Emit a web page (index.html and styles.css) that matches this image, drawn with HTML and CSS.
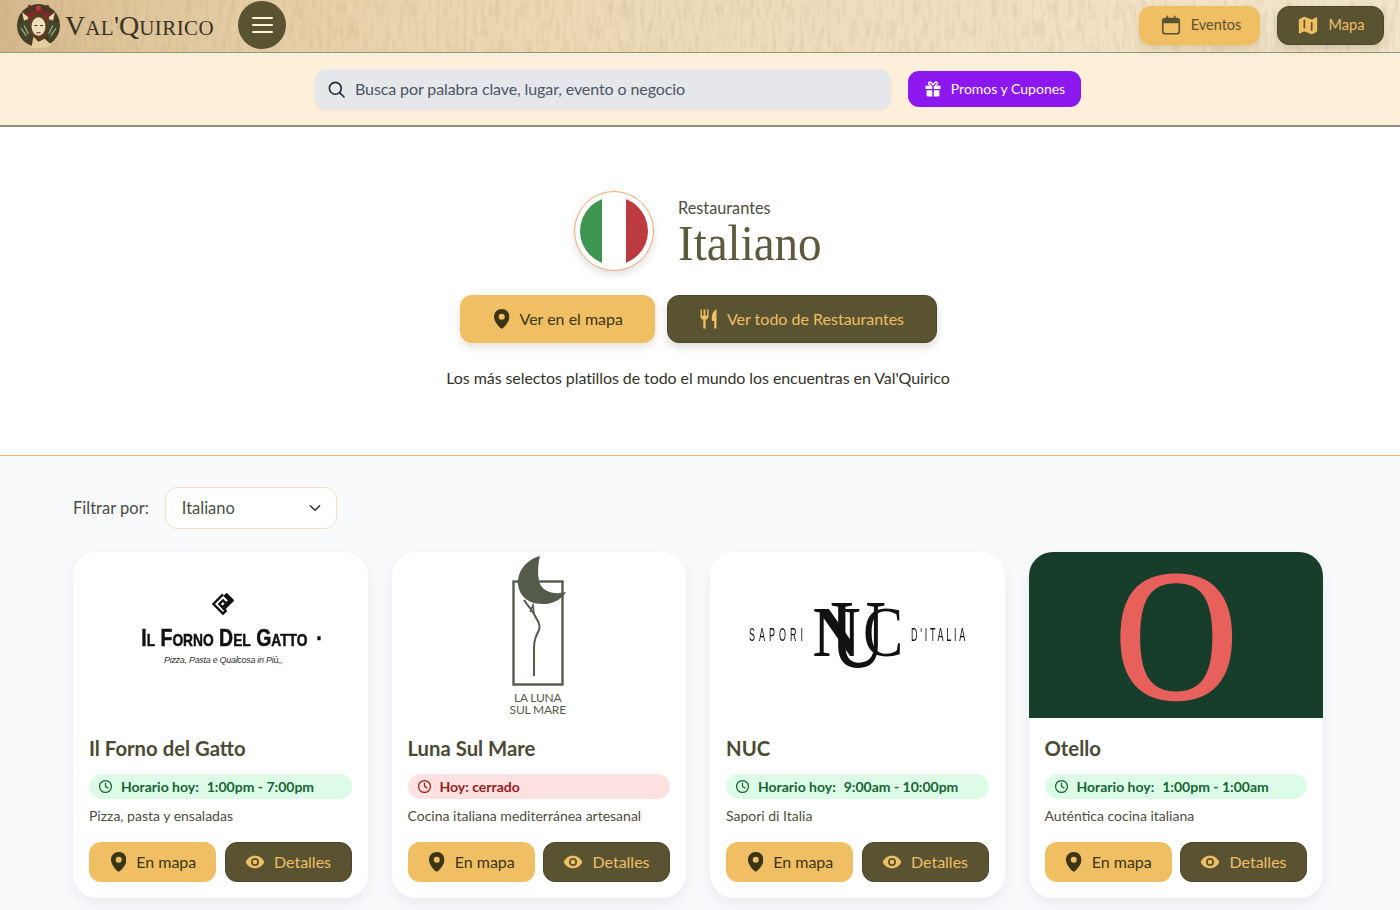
FILE: index.html
```html
<!DOCTYPE html>
<html lang="es">
<head>
<meta charset="utf-8">
<title>Val'Quirico - Italiano</title>
<link rel="stylesheet" href="styles.css">
</head>
<body>
<svg class="defs" aria-hidden="true">
  <defs>
    <symbol id="pin" viewBox="3.800 1.500 16.400 21"><path fill-rule="evenodd" d="M12 1.500C7.300 1.500 3.800 5 3.800 9.600c0 5.600 5.500 10.600 7.300 12.300.5.500 1.300.500 1.800 0 1.800-1.700 7.300-6.700 7.300-12.300C20.200 5 16.700 1.500 12 1.500zm0 11.300a3.200 3.200 0 1 1 0-6.400 3.200 3.200 0 0 1 0 6.400z"/></symbol>
    <symbol id="eye" viewBox="0 0 24 24"><path fill-rule="evenodd" d="M12 4.500C6.800 4.500 2.600 7.700 .8 12c1.800 4.300 6 7.500 11.200 7.500s9.400-3.200 11.200-7.500C21.400 7.700 17.200 4.500 12 4.500zm0 12.300a4.800 4.800 0 1 1 0-9.600 4.800 4.800 0 0 1 0 9.600zm0-7.500a2.700 2.700 0 1 0 0 5.400 2.700 2.700 0 0 0 0-5.400z"/></symbol>
    <symbol id="clock" viewBox="0 0 24 24"><circle cx="12" cy="12" r="9.500" fill="none" stroke="currentColor" stroke-width="2"/><path d="M12 6.500V12l3.800 2.200" fill="none" stroke="currentColor" stroke-width="2" stroke-linecap="round"/></symbol>
  </defs>
</svg>

<header class="topbar">
  <svg class="paper" aria-hidden="true" preserveAspectRatio="none">
    <filter id="fibers"><feTurbulence type="fractalNoise" baseFrequency="0.22 0.05" numOctaves="4" seed="7"/><feColorMatrix values="0 0 0 0 0.42  0 0 0 0 0.30  0 0 0 0 0.14  0 0 0 1.400 -0.600"/></filter>
    <rect width="100%" height="100%" filter="url(#fibers)"/>
  </svg>
  <div class="brand">
    <svg class="medallion" viewBox="1 2 44 44" aria-hidden="true">
      <circle cx="23" cy="24" r="21" fill="#4a3a22"/>
      <path d="M8 15c4-8 26-8 30 0l-6 7H14z" fill="#7d2a2c"/>
      <circle cx="23" cy="7" r="2.500" fill="#b33a3a"/><circle cx="14" cy="5" r="1.300" fill="#7d2a2c"/><circle cx="32" cy="5" r="1.300" fill="#7d2a2c"/>
      <path d="M7 11l6 5-3 9zM39 11l-6 5 3 9z" fill="#e8d9b0"/>
      <path d="M3 24c3 8 6 13 10 16l3-14-5-8zM43 24c-3 8-6 13-10 16l-3-14 5-8z" fill="#3d4a30"/>
      <path d="M6 27l5 7M9 24l4 8M40 27l-5 7M37 24l-4 8" stroke="#c9b98a" stroke-width="1" fill="none"/>
      <ellipse cx="23" cy="25" rx="10" ry="13" fill="#5a4022"/>
      <ellipse cx="23" cy="25" rx="6.800" ry="9" fill="#f1dfbc"/>
      <path d="M19 24h3M24.500 24h3M21 31h4" stroke="#4a3320" stroke-width="1" fill="none"/>
      <path d="M16 46l2-11 5 5 6-3 7 6c-5 3-13 4-20 3z" fill="#e3cf9d"/>
    </svg>
    <div class="wordmark">V<small>AL</small>'Q<small>UIRICO</small></div>
    <button class="menu-btn" aria-label="Menú"><span></span><span></span><span></span></button>
  </div>
  <nav class="top-actions">
    <a class="btn btn-gold btn-top btn-events">
      <svg class="ico-cal" viewBox="0 0 24 24" aria-hidden="true"><rect x="3" y="5" width="18" height="16.500" rx="2.500" fill="none" stroke="currentColor" stroke-width="1.800"/><path d="M3.500 10h17V7.500a2 2 0 0 0-2-2h-13a2 2 0 0 0-2 2z" fill="currentColor"/><path d="M8 2.500v4M16 2.500v4" stroke="currentColor" stroke-width="1.800" stroke-linecap="round"/></svg>
      <span>Eventos</span>
    </a>
    <a class="btn btn-dark btn-top btn-map">
      <svg class="ico-map" viewBox="0 0 24 24" aria-hidden="true"><path d="M2 6.500c0-.5.300-.9.700-1.100L7 3.200c.6-.3 1.300-.3 1.900 0l6.200 2.600c.6.300 1.300.3 1.900 0l3.500-2c.7-.4 1.500.1 1.500.9v13.800c0 .5-.3.9-.7 1.100L17 21.800c-.6.300-1.300.3-1.900 0L8.900 19.200c-.6-.3-1.300-.3-1.900 0l-3.500 2c-.7.400-1.500-.1-1.500-.9z"/><path class="map-crease" d="M8 7v8M16 9.500v8"/></svg>
      <span>Mapa</span>
    </a>
  </nav>
</header>

<section class="searchbar">
  <div class="search-input">
    <svg class="ico-search" viewBox="0 0 24 24" aria-hidden="true"><circle cx="10.500" cy="10.500" r="7.500" fill="none" stroke="currentColor" stroke-width="2"/><path d="M16 16l5.500 5.500" stroke="currentColor" stroke-width="2" stroke-linecap="round"/></svg>
    <span>Busca por palabra clave, lugar, evento o negocio</span>
  </div>
  <a class="promo-btn">
    <svg class="ico-gift" viewBox="0 0 24 24" aria-hidden="true"><path d="M2 7.500h9v4.500H2zM13 7.500h9v4.500h-9zM3.500 13.500H11V22H5a1.500 1.500 0 0 1-1.500-1.500zM13 13.500h7.500v7A1.500 1.500 0 0 1 19 22h-6z" fill="currentColor"/><path d="M12 7C10 3 8 2.200 6.800 3 5.500 4 6 6.800 9 7M12 7c2-4 4-4.800 5.200-4 1.300 1 .8 3.800-2.200 4" fill="none" stroke="currentColor" stroke-width="1.800"/></svg>
    <span>Promos y Cupones</span>
  </a>
</section>

<section class="hero">
  <div class="hero-head">
    <div class="flag"><div class="flag-inner"><i class="flag-g"></i><i class="flag-w"></i><i class="flag-r"></i></div></div>
    <div class="hero-titles">
      <div class="eyebrow">Restaurantes</div>
      <h1>Italiano</h1>
    </div>
  </div>
  <div class="hero-actions">
    <a class="btn btn-gold btn-hero btn-hero-map"><svg class="ico-md"><use href="#pin"/></svg><span>Ver en el mapa</span></a>
    <a class="btn btn-dark btn-hero btn-hero-all">
      <svg class="ico-fork" viewBox="2.500 1.500 18 21" aria-hidden="true"><path d="M3 2v7c0 2 1.300 3.300 3 3.700V22h2.500v-9.300c1.700-.4 3-1.700 3-3.700V2h-1.500v6.500H8.200V2H6.300v6.500H4.500V2zM20 2c-3 1-5 4.500-5 9v3h2.500v8H20z"/></svg>
      <span>Ver todo de Restaurantes</span>
    </a>
  </div>
  <p class="hero-text">Los más selectos platillos de todo el mundo los encuentras en Val'Quirico</p>
</section>

<main class="listing">
  <div class="filter">
    <label>Filtrar por:</label>
    <div class="select">
      <span>Italiano</span>
      <svg class="ico-chev" viewBox="0 0 24 24" aria-hidden="true"><path d="M5 8.500l7 7 7-7" fill="none" stroke="currentColor" stroke-width="2.200" stroke-linecap="round" stroke-linejoin="round"/></svg>
    </div>
  </div>

  <div class="grid">
    <article class="card">
      <div class="card-img logo-forno">
        <svg class="forno-mark" viewBox="0 0 24 24" aria-hidden="true"><path d="M12 1.500 1.500 12 12 22.500l3-3L8 12l4-4 3.500 3.500-3 3 1.800 1.800L22.500 8 16 1.500l-1.800 1.800 4.800 4.700-3.500 3.500L12 8" fill="none" stroke="#111" stroke-width="2.600"/></svg>
        <div class="forno-name"><span>Il Forno Del Gatto</span><b>·</b></div>
        <div class="forno-sub">Pizza, Pasta e Qualcosa in Più,,</div>
      </div>
      <div class="card-body">
        <h2>Il Forno del Gatto</h2>
        <div class="pill pill-open"><svg class="ico-clock"><use href="#clock"/></svg><span class="pill-label">Horario hoy:</span><span>1:00pm - 7:00pm</span></div>
        <p>Pizza, pasta y ensaladas</p>
        <div class="card-actions">
          <a class="btn btn-gold btn-card"><svg class="ico-md"><use href="#pin"/></svg><span>En mapa</span></a>
          <a class="btn btn-dark btn-card"><svg class="ico-eye"><use href="#eye"/></svg><span>Detalles</span></a>
        </div>
      </div>
    </article>

    <article class="card">
      <div class="card-img logo-luna">
        <svg class="luna-mark" viewBox="-1 0 120 150" aria-hidden="true">
          <rect x="33.500" y="31.500" width="49" height="103" fill="none" stroke="#555b4b" stroke-width="2.400"/>
          <path d="M60 6C42 11 37 26 38 35c2 14 14 20 28 19 10-1 16-6 20-12-12 3-22 0-26-8-3-9-2-20 0-28z" fill="#555b4b"/>
          <path d="M44 50c3 5 7 8 10 14 3 6 7 10 5 16-3 6-5 10-5 18l0 28" fill="none" stroke="#555b4b" stroke-width="2"/>
          <path d="M50 62l3-7 1 9" fill="none" stroke="#555b4b" stroke-width="1.500"/>
        </svg>
        <div class="luna-name">LA LUNA<br>SUL MARE</div>
      </div>
      <div class="card-body">
        <h2>Luna Sul Mare</h2>
        <div class="pill pill-closed"><svg class="ico-clock"><use href="#clock"/></svg><span>Hoy: cerrado</span></div>
        <p>Cocina italiana mediterránea artesanal</p>
        <div class="card-actions">
          <a class="btn btn-gold btn-card"><svg class="ico-md"><use href="#pin"/></svg><span>En mapa</span></a>
          <a class="btn btn-dark btn-card"><svg class="ico-eye"><use href="#eye"/></svg><span>Detalles</span></a>
        </div>
      </div>
    </article>

    <article class="card">
      <div class="card-img logo-nuc">
        <span class="nuc-side">SAPORI</span>
        <span class="nuc-mono"><span class="nuc-n">N</span><span class="nuc-u">U</span><span class="nuc-c">C</span></span>
        <span class="nuc-side nuc-side-end">D'ITALIA</span>
      </div>
      <div class="card-body">
        <h2>NUC</h2>
        <div class="pill pill-open"><svg class="ico-clock"><use href="#clock"/></svg><span class="pill-label">Horario hoy:</span><span>9:00am - 10:00pm</span></div>
        <p>Sapori di Italia</p>
        <div class="card-actions">
          <a class="btn btn-gold btn-card"><svg class="ico-md"><use href="#pin"/></svg><span>En mapa</span></a>
          <a class="btn btn-dark btn-card"><svg class="ico-eye"><use href="#eye"/></svg><span>Detalles</span></a>
        </div>
      </div>
    </article>

    <article class="card">
      <div class="card-img logo-otello"><span>O</span></div>
      <div class="card-body">
        <h2>Otello</h2>
        <div class="pill pill-open"><svg class="ico-clock"><use href="#clock"/></svg><span class="pill-label">Horario hoy:</span><span>1:00pm - 1:00am</span></div>
        <p>Auténtica cocina italiana</p>
        <div class="card-actions">
          <a class="btn btn-gold btn-card"><svg class="ico-md"><use href="#pin"/></svg><span>En mapa</span></a>
          <a class="btn btn-dark btn-card"><svg class="ico-eye"><use href="#eye"/></svg><span>Detalles</span></a>
        </div>
      </div>
    </article>
  </div>
</main>
</body>
</html>
```
FILE: styles.css
```css
* { box-sizing: border-box; }
html, body { margin: 0; padding: 0; }
body {
  width: 1400px;
  height: 910px;
  overflow: hidden;
  font-family: Lato, "Liberation Sans", sans-serif;
  color: #3f3f32;
  background: #f8fafc;
}
.defs { position: absolute; width: 0; height: 0; }
svg { display: block; flex: none; fill: currentColor; }
a { text-decoration: none; }

/* top bar */
.topbar {
  position: relative;
  height: 53px;
  display: flex;
  justify-content: space-between;
  align-items: center;
  padding: 0 16px 2px 16px;
  border-bottom: 1px solid #8b9a78;
  background: linear-gradient(90deg, #d3b88b 0%, #e0c79c 10%, #ead4ae 28%, #eedcbb 55%, #f1e2c7 80%, #f2e5cc 100%);
}
.paper { position: absolute; inset: 0; width: 100%; height: 100%; opacity: .32; }
.brand { position: relative; display: flex; align-items: center; }
.medallion { width: 45px; height: 45px; margin-right: 4px; }
.wordmark {
  width: 173px;
  font-family: "Liberation Serif", serif;
  font-size: 28px;
  line-height: 30px;
  color: #3a301f;
  padding-top: 4px;
  white-space: nowrap;
}
.wordmark small { font-size: 21px; letter-spacing: .4px; }
.menu-btn {
  width: 48px;
  height: 48px;
  border: 0;
  border-radius: 50%;
  background: #595332;
  display: flex;
  flex-direction: column;
  justify-content: center;
  align-items: center;
  gap: 5px;
  padding: 0;
}
.menu-btn span { width: 21px; height: 2px; background: #fdf4df; border-radius: 2px; }
.top-actions { position: relative; display: flex; gap: 17px; }

/* buttons */
.btn {
  display: flex;
  align-items: center;
  justify-content: center;
  white-space: nowrap;
}
.btn span { padding-bottom: 2px; }
.btn-gold {
  background: #f0bf63;
  color: #3b3515;
  box-shadow: 0 4px 8px rgba(120, 90, 30, .18);
}
.btn-dark {
  background: #595332;
  color: #f0bf63;
  box-shadow: 0 4px 8px rgba(60, 55, 30, .18);
}
.btn-top { height: 39px; border-radius: 12px; font-size: 14.500px; gap: 10px; }
.btn-top span { padding-bottom: 1px; }
.btn-events { width: 121px; color: #595332; padding-left: 2px; gap: 9px; }
.btn-map { width: 107px; border: 1px solid #4c472a; }
.ico-cal { width: 22px; height: 22px; }
.ico-map { width: 22px; height: 22px; }
.map-crease { fill: none; stroke: #595332; stroke-width: 1.800; stroke-linecap: round; }

/* search */
.searchbar {
  height: 74px;
  display: flex;
  justify-content: center;
  align-items: center;
  gap: 17px;
  padding: 0 4px 0 0;
  background: #fdefd9;
  border-bottom: 2px solid #8f9088;
}
.search-input {
  width: 576px;
  height: 41px;
  margin-top: 1px;
  display: flex;
  align-items: center;
  gap: 9px;
  padding-left: 12px;
  border-radius: 12px;
  background: #e5e7eb;
  box-shadow: 0 1px 2px rgba(0, 0, 0, .05);
  font-size: 16px;
  letter-spacing: -.1px;
  color: #4b5563;
}
.search-input span { padding-bottom: 2px; }
.ico-search { width: 19px; height: 19px; color: #1f2937; }
.promo-btn {
  width: 173px;
  height: 36px;
  display: flex;
  align-items: center;
  justify-content: center;
  gap: 9px;
  border-radius: 11px;
  background: #8c17ef;
  color: #fff;
  font-size: 14px;
}
.promo-btn span { padding-bottom: 1px; }
.ico-gift { width: 18px; height: 18px; }

/* hero */
.hero {
  height: 329px;
  background: #fff;
  border-bottom: 1px solid #e8b96f;
  padding: 64px 4px 0 0;
  display: flex;
  flex-direction: column;
  align-items: center;
}
.hero-head { display: flex; align-items: center; gap: 24px; height: 80px; }
.flag {
  width: 80px;
  height: 80px;
  padding: 5px;
  border-radius: 50%;
  background: #fff;
  border: 1.500px solid #f0ab6b;
  box-shadow: 0 4px 8px rgba(0, 0, 0, .12);
}
.flag-inner { width: 100%; height: 100%; display: flex; border-radius: 50%; overflow: hidden; }
.flag-inner i { display: block; }
.flag-g { width: 21.500px; background: #3f9650; }
.flag-w { width: 24.500px; background: #fff; }
.flag-r { flex: 1; background: #bd3a40; }
.hero-titles { margin-top: 3px; width: 144px; }
.eyebrow { font-size: 16.300px; line-height: 20px; color: #4d4d40; white-space: nowrap; margin-bottom: 1px; }
h1 {
  margin: 0;
  font-family: "Liberation Serif", serif;
  font-weight: 400;
  font-size: 50px;
  line-height: 48px;
  color: #5b5a3c;
  white-space: nowrap;
  transform: scaleX(.94);
  transform-origin: left center;
}
.hero-actions { display: flex; gap: 12px; margin-top: 24px; }
.btn-hero { height: 48px; border-radius: 12px; font-size: 16px; gap: 10px; }
.btn-hero-map { width: 195px; padding-left: 3px; }
.btn-hero-all { width: 270px; border: 1px solid #4c472a; padding-left: 1px; }
.ico-fork { width: 17px; height: 20px; }
.ico-md { width: 15.500px; height: 20px; }
.hero-text { margin: 25px 0 0; font-size: 16px; line-height: 20px; letter-spacing: -.08px; color: #33332a; }

/* listing */
.listing { padding: 31px 77px 0 73px; background: #f8fafc; }
.filter { display: flex; align-items: center; gap: 16px; height: 42px; }
.filter label { font-size: 16.500px; color: #4d4d40; }
.select {
  width: 172.500px;
  height: 42px;
  display: flex;
  align-items: center;
  justify-content: space-between;
  padding: 0 13px 0 16px;
  background: #fff;
  border: 1px solid #f3dfc0;
  border-radius: 12px;
  font-size: 16.500px;
  color: #4d4d40;
}
.ico-chev { width: 16px; height: 16px; color: #33332a; }
.grid {
  display: grid;
  grid-template-columns: repeat(4, 294.500px);
  column-gap: 24px;
  margin-top: 23px;
}
.card {
  height: 346px;
  background: #fff;
  border-radius: 24px;
  overflow: hidden;
  box-shadow: 0 6px 14px rgba(60, 70, 90, .08);
}
.card-img { height: 166px; background: #fff; }
.card-body { padding: 18px 16px 0; }
h2 { margin: 0; font-size: 20.300px; line-height: 24px; font-weight: 700; color: #4a4a33; }
.pill {
  height: 25px;
  margin-top: 14px;
  display: flex;
  align-items: center;
  padding-left: 9px;
  border-radius: 13px;
  font-size: 14px;
  font-weight: 700;
}
.pill span { padding-bottom: 1px; }
.pill-open { background: #dcfce7; color: #166534; }
.pill-closed { background: #fee2e2; color: #991b1b; }
.pill-label { margin-right: 8px; }
.ico-clock { width: 15px; height: 15px; margin-right: 8px; }
.card-body p { margin: 7px 0 0; font-size: 14px; line-height: 20px; color: #4d4d40; }
.card-actions { display: flex; gap: 8.500px; margin-top: 16px; }
.btn-card { width: 127px; height: 40px; border-radius: 12px; font-size: 16px; gap: 10px; padding-left: 2px; box-shadow: none; }
.btn-dark.btn-card { border: 1px solid #4c472a; gap: 9px; padding-left: 0; }
.ico-eye { width: 20px; height: 20px; }

/* logos */
.logo-forno { display: flex; flex-direction: column; align-items: center; padding: 41px 0 0 6px; color: #111; }
.forno-mark { width: 22px; height: 22px; margin-left: 0; }
.forno-name {
  margin: 11px 0 0 17px;
  font-family: "Liberation Sans Narrow", "Liberation Sans", sans-serif;
  font-weight: 700;
  font-size: 24px;
  line-height: 24px;
  font-variant: small-caps;
  white-space: nowrap;
  display: flex;
  gap: 11px;
  -webkit-text-stroke: .5px #111;
  transform: scaleX(.81);
  transform-origin: center;
}
.forno-sub { margin: 4px 0 0 0; font-family: "Liberation Sans", sans-serif; font-size: 9px; font-style: italic; color: #333; line-height: 12px; letter-spacing: -.3px; }
.logo-luna { display: flex; flex-direction: column; align-items: center; }
.luna-mark { width: 120px; height: 150px; margin-top: -2px; }
.luna-name {
  margin-top: -8px;
  font-size: 12px;
  line-height: 12px;
  text-align: center;
  color: #555b4b;
  letter-spacing: -.2px;
  transform: translateX(-1px);
}
.logo-nuc {
  display: flex;
  align-items: center;
  justify-content: center;
  color: #111;
}
.nuc-side {
  font-family: "Liberation Sans Narrow", "Liberation Sans", sans-serif;
  font-size: 18px;
  letter-spacing: 8px;
  width: 55px;
  white-space: nowrap;
  transform: scaleX(.5);
  transform-origin: left center;
}
.nuc-side-end { letter-spacing: 5.500px; }
.nuc-mono {
  position: relative;
  width: 88px;
  height: 66px;
  margin: 0 10px 0 9px;
  font-family: "Liberation Serif", serif;
}
.nuc-mono span { position: absolute; line-height: 1; transform-origin: left top; }
.nuc-n { font-size: 71px; left: 0; top: -5px; transform: scaleX(.92); font-weight: 700; }
.nuc-u { font-size: 97px; left: 17px; top: -16px; transform: scaleX(.8); }
.nuc-c { font-size: 71px; left: 50px; top: -5px; transform: scaleX(.85); }
.logo-otello {
  background: #173d2b;
  display: flex;
  align-items: center;
  justify-content: center;
  color: #e8605c;
}
.logo-otello span {
  font-family: "Liberation Serif", serif;
  font-size: 150px;
  line-height: .8;
  -webkit-text-stroke: 2px #e8605c;
  transform: scale(1.140, 1.240);
}
```
